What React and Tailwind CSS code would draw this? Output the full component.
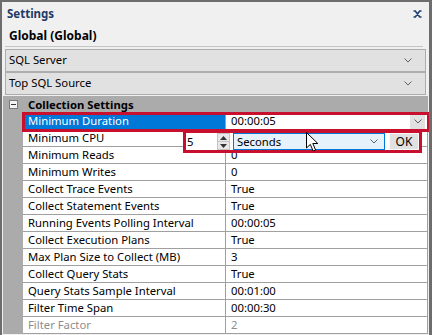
import React from 'react';

const rows = [
  ['Minimum CPU', '0'],
  ['Minimum Reads', '0'],
  ['Minimum Writes', '0'],
  ['Collect Trace Events', 'True'],
  ['Collect Statement Events', 'True'],
  ['Running Events Polling Interval', '00:00:05'],
  ['Collect Execution Plans', 'True'],
  ['Max Plan Size to Collect (MB)', '3'],
  ['Collect Query Stats', 'True'],
  ['Query Stats Sample Interval', '00:01:00'],
  ['Filter Time Span', '00:00:30'],
  ['Filter Factor', '2', true],
];

function Chevron({ color = '#606060' }) {
  return (
    <svg width="8" height="5" viewBox="0 0 8 5">
      <path d="M0.5 0.5 L4 4 L7.5 0.5" fill="none" stroke={color} strokeWidth="1" />
    </svg>
  );
}

function Combo({ label }) {
  return (
    <div className="ml-[3px] mr-[3px] h-[23px] border border-[#adadad] bg-[#e1e1e1] flex items-center justify-between pl-[3px] pr-[13px]">
      <span>{label}</span>
      <Chevron />
    </div>
  );
}

function Row({ label, value, disabled }) {
  const tone = disabled ? 'text-[#8d8d8d]' : 'text-black';
  return (
    <div className="flex h-[17px]">
      <div className="w-[20px] bg-[#ababab]" />
      <div className={`w-[203px] bg-white border-b border-r border-[#a0a0a0] pl-[5px] leading-[16px] ${tone}`}>
        {label}
      </div>
      <div className={`flex-1 bg-white border-b border-r border-[#a0a0a0] pl-[5px] leading-[16px] ${tone}`}>
        {value}
      </div>
    </div>
  );
}

export default function App() {
  return (
    <div
      className="w-[432px] h-[335px] overflow-hidden bg-[#f0f0f0] border-t-2 border-l-2 border-r-[3px] border-[#6d6d6d] text-[11.3px] text-black"
      style={{ fontFamily: '"Noto Sans", sans-serif' }}
    >
      <div className="h-[24px] flex items-center justify-between pl-[5px] pr-[7px]">
        <span className="font-bold text-[11.5px] text-[#1e3a64]">Settings</span>
        <svg width="9" height="8" viewBox="0 0 9 8">
          <path
            d="M0.5 1 H2.3 L6.7 7 H8.5 M0.5 7 H2.3 L6.7 1 H8.5"
            fill="none"
            stroke="#1e3f75"
            strokeWidth="1.6"
          />
        </svg>
      </div>
      <div className="h-[20px] flex items-center pl-[7px] font-bold text-[12px]">Global (Global)</div>
      <div className="ml-[3px] mr-[6px] h-px bg-[#c4c4c4]" />
      <div className="h-[2px]" />
      <Combo label="SQL Server" />
      <Combo label="Top SQL Source" />

      <div className="relative ml-[1px] mr-[1px] mt-[1px]">
        <div className="flex h-[17px] bg-[#ababab] items-center">
          <div className="w-[20px] flex justify-center">
            <div className="w-[9px] h-[9px] border border-[#7a7a7a] bg-[#f4f4f4] flex items-center justify-center -mt-px">
              <div className="w-[5px] h-px bg-[#333]" />
            </div>
          </div>
          <span className="pl-[5px] font-bold leading-[16px]">Collection Settings</span>
        </div>

        <div className="flex h-[17px]">
          <div className="w-[20px] bg-[#ababab]" />
          <div className="w-[203px] bg-[#0078d7] text-white border-b border-r border-[#a0a0a0] pl-[5px] leading-[16px]">
            Minimum Duration
          </div>
          <div className="flex-1 bg-white border-b border-r border-[#a0a0a0] pl-[5px] flex items-center justify-between leading-[16px]">
            <span>00:00:05</span>
            <div className="w-[15px] h-[15px] mr-[2px] bg-[#e1e1e1] flex items-center justify-center">
              <Chevron />
            </div>
          </div>
        </div>

        {rows.map(([l, v, d]) => (
          <Row key={l} label={l} value={v} disabled={d} />
        ))}

        <div className="absolute left-[19px] top-[16px] w-[408px] h-[20px] border-[3px] border-[#c8102e]" />

        <div className="absolute left-[180px] top-[34px] w-[239px] h-[23px] border-[3px] border-[#c8102e] bg-white flex items-center gap-[3px]">
          <div className="w-[44px] h-[17px] bg-white flex items-center justify-between">
            <span className="pl-[1px] leading-[16px]">5</span>
            <div className="w-[13px] h-[17px] flex flex-col border border-[#c4c4c4] bg-[#e8e8e8]">
              <div className="flex-1 flex items-center justify-center border-b border-[#c4c4c4]">
                <svg width="7" height="4" viewBox="0 0 7 4">
                  <path d="M0 4 L3.5 0 L7 4 Z" fill="#333" />
                </svg>
              </div>
              <div className="flex-1 flex items-center justify-center">
                <svg width="7" height="4" viewBox="0 0 7 4">
                  <path d="M0 0 L3.5 4 L7 0 Z" fill="#333" />
                </svg>
              </div>
            </div>
          </div>
          <div className="w-[152px] h-[17px] bg-[#e5f1fb] border border-[#0078d7] flex items-center justify-between pl-[3px] pr-[6px]">
            <span className="leading-[15px]">Seconds</span>
            <Chevron />
          </div>
          <div className="ml-[1px] w-[30px] h-[17px] bg-[#e1e1e1] border border-[#f8f8f8] flex items-center justify-center text-[12px] leading-[15px]">
            OK
          </div>
        </div>

        <svg className="absolute left-[303px] top-[36px]" width="13" height="20" viewBox="0 0 13 20">
          <path
            d="M0.5 0.5 L0.5 16 L4.3 12.4 L7.2 19 L9.6 18 L6.8 11.5 L11.8 11.5 Z"
            fill="white"
            stroke="black"
            strokeWidth="1"
          />
        </svg>
      </div>
    </div>
  );
}
